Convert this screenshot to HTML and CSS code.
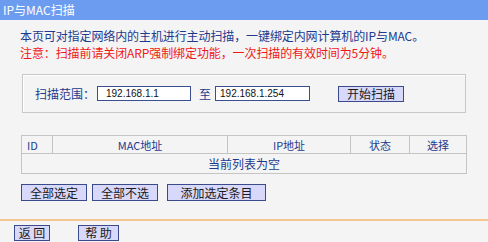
FILE: index.html
```html
<!DOCTYPE html>
<html lang="zh-CN">
<head>
<meta charset="utf-8">
<title>IP与MAC扫描</title>
<link rel="stylesheet" href="styles.css">
</head>
<body>
<div class="title">IP与MAC扫描</div>
<div class="content">
  <p class="intro">本页可对指定网络内的主机进行主动扫描，一键绑定内网计算机的IP与MAC。</p>
  <p class="warn">注意：扫描前请关闭ARP强制绑定功能，一次扫描的有效时间为5分钟。</p>
  <div class="scanbox">
    <span class="label">扫描范围：</span>
    <input class="ip" type="text" value="192.168.1.1">
    <span class="to">至</span>
    <input class="ip ip2" type="text" value="192.168.1.254">
    <button class="btn start">开始扫描</button>
  </div>
  <table class="list">
    <colgroup>
      <col class="c-id">
      <col class="c-mac">
      <col class="c-ip">
      <col class="c-st">
      <col class="c-sel">
    </colgroup>
    <thead>
      <tr>
        <th class="h-id">ID</th>
        <th>MAC地址</th>
        <th>IP地址</th>
        <th>状态</th>
        <th>选择</th>
      </tr>
    </thead>
    <tbody>
      <tr><td colspan="5" class="empty">当前列表为空</td></tr>
    </tbody>
  </table>
  <div class="actions">
    <button class="btn w66">全部选定</button>
    <button class="btn w66">全部不选</button>
    <button class="btn w100">添加选定条目</button>
  </div>
</div>
<div class="rule"></div>
<div class="footer">
  <button class="btn small">返 回</button>
  <button class="btn small help">帮 助</button>
</div>
</body>
</html>
```
FILE: styles.css
```css
html, body {
  margin: 0;
  padding: 0;
  background: #f4f4f4;
  font-family: "Noto Sans CJK SC", "Noto Sans", sans-serif;
  font-size: 12px;
  color: #1c3a8e;
}
.title {
  height: 20px;
  line-height: 20px;
  background: #6b9cf0;
  color: #ffffff;
  padding-left: 3px;
  font-size: 12px;
}
.content {
  padding-left: 20px;
  padding-top: 7px;
}
.intro, .warn {
  margin: 0;
  height: 17px;
  line-height: 17px;
  letter-spacing: -0.1px;
}
.warn {
  color: #f01818;
}
.scanbox {
  margin-top: 13px;
  margin-left: 2px;
  width: 430px;
  height: 37px;
  border: 1px solid #c8c8c8;
  box-shadow: inset 1px 1px 0 #ffffff;
  display: flex;
  align-items: center;
  padding-left: 12px;
  box-sizing: content-box;
}
.label {
  width: 62px;
}
.ip {
  width: 94px;
  height: 15px;
  box-sizing: border-box;
  border: 1px solid #3a4f8f;
  background: #ffffff;
  font-family: "Liberation Sans", sans-serif;
  font-size: 10px;
  color: #111;
  padding: 0 0 0 8px;
  margin: 0;
  outline: none;
}
.ip2 {
  width: 95px;
  padding-left: 4px;
}
.to {
  margin: 0 4px 0 8px;
}
.btn {
  box-sizing: border-box;
  height: 16px;
  border: 1px solid #3a4a8a;
  background: #d8d8fa;
  color: #1a1a1a;
  font-family: "Noto Sans CJK SC", sans-serif;
  font-size: 12px;
  line-height: 14px;
  padding: 0;
  margin: 0;
}
.start {
  width: 66px;
  margin-left: 28px;
}
.list {
  margin-top: 22px;
  margin-left: 1px;
  width: 445px;
  table-layout: fixed;
  border-collapse: collapse;
  border: 1px solid #b8b8b8;
}
.c-id { width: 31px; }
.c-mac { width: 175px; }
.c-ip { width: 123px; }
.c-st { width: 59px; }
.c-sel { width: 57px; }
.list th, .list td {
  border: 1px solid #c4c4c4;
  font-weight: normal;
  height: 17px;
  padding: 0;
  text-align: center;
  line-height: 16px;
}
.list th {
  font-size: 11px;
}
.list th.h-id {
  text-align: left;
  padding-left: 5px;
}
.list td.empty {
  height: 19px;
}
.actions {
  margin-top: 10px;
  margin-left: 1px;
  display: flex;
  gap: 5px;
}
.w66 { width: 66px; height: 17px; }
.w100 { width: 99px; height: 17px; margin-left: 4px; }
.rule {
  margin-top: 18px;
  height: 2px;
  background: #f6c690;
}
.footer {
  padding-left: 14px;
  padding-top: 4px;
  display: flex;
}
.small {
  width: 36px;
  height: 16px;
}
.help {
  margin-left: 28px;
  width: 41px;
}
```
